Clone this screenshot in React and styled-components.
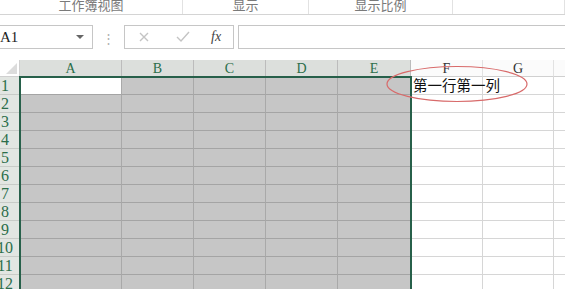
import React from "react";
import styled, { createGlobalStyle } from "styled-components";

const GlobalStyle = createGlobalStyle`
  html, body { margin: 0; padding: 0; background: #fff; overflow: hidden; }
  body { font-family: "Noto Sans CJK SC", "Liberation Sans", sans-serif; }
`;

const columns = [
  { name: "A", width: 102, sel: true },
  { name: "B", width: 72, sel: true },
  { name: "C", width: 72, sel: true },
  { name: "D", width: 72, sel: true },
  { name: "E", width: 73, sel: true },
  { name: "F", width: 72 },
  { name: "G", width: 71 },
  { name: "H", width: 60 },
];

const rows = [1, 2, 3, 4, 5, 6, 7, 8, 9, 10, 11, 12];

const groups = [
  { label: "工作簿视图", width: 183 },
  { label: "显示", width: 126 },
  { label: "显示比例", width: 144 },
  { label: "", width: 112 },
];

const gridTemplate = `28px ${columns.map((c) => c.width + "px").join(" ")}`;

export default function App() {
  return (
    <Page>
      <GlobalStyle />
      <Ribbon>
        {groups.map((g, i) => (
          <Group key={i} $w={g.width}>
            <GroupLabel>{g.label}</GroupLabel>
          </Group>
        ))}
      </Ribbon>

      <FormulaBar>
        <NameBox>
          <span>A1</span>
          <Caret />
        </NameBox>
        <Dots>⋮</Dots>
        <FxBox>
          <FxIcon>
            <svg width="12" height="12" viewBox="0 0 12 12">
              <path d="M2 2 L10 10 M10 2 L2 10" stroke="#c4c4c4" strokeWidth="1.4" />
            </svg>
          </FxIcon>
          <FxIcon>
            <svg width="14" height="12" viewBox="0 0 14 12">
              <path d="M1 6 L5 10 L13 1" stroke="#c4c4c4" strokeWidth="1.4" fill="none" />
            </svg>
          </FxIcon>
          <FxLabel>fx</FxLabel>
        </FxBox>
        <FormulaInput />
      </FormulaBar>

      <Sheet>
        <Grid>
          <Corner>
            <CornerTri />
          </Corner>
          {columns.map((c) => (
            <ColHead key={c.name} $sel={c.sel}>
              {c.name}
            </ColHead>
          ))}
          {rows.map((r) => (
            <React.Fragment key={r}>
              <RowHead>{r}</RowHead>
              {columns.map((c) => (
                <Cell
                  key={c.name}
                  $sel={c.sel}
                  $active={r === 1 && c.name === "A"}
                >
                  {r === 1 && c.name === "F" && <CellText>第一行第一列</CellText>}
                </Cell>
              ))}
            </React.Fragment>
          ))}
        </Grid>
        <Selection />
        <Mark width="150" height="42" viewBox="0 0 150 42">
          <ellipse cx="75" cy="20" rx="70" ry="17.5" fill="none" stroke="#d86a6a" strokeWidth="1.2" />
        </Mark>
      </Sheet>
    </Page>
  );
}

const Page = styled.div`
  width: 565px;
  height: 289px;
  overflow: hidden;
  background: #fff;
  position: relative;
`;

const Ribbon = styled.div`
  display: flex;
  height: 14px;
  border-bottom: 1px solid #d4d4d4;
  overflow: hidden;
`;

const Group = styled.div`
  width: ${(p) => p.$w}px;
  flex: none;
  display: flex;
  align-items: flex-end;
  justify-content: center;
  border-right: 1px solid #e2e2e2;
  box-sizing: border-box;
`;

const GroupLabel = styled.div`
  font-size: 13px;
  line-height: 13px;
  color: #7a7a7a;
  margin-bottom: 3px;
`;

const FormulaBar = styled.div`
  display: flex;
  align-items: center;
  height: 24px;
  margin-top: 10px;
  margin-left: -6px;
`;

const NameBox = styled.div`
  width: 99px;
  height: 24px;
  box-sizing: border-box;
  border: 1px solid #c6c6c6;
  display: flex;
  align-items: center;
  justify-content: space-between;
  padding: 0 8px 0 5px;
  font-family: "Liberation Serif", serif;
  font-size: 15px;
  color: #222;
`;

const Caret = styled.div`
  width: 0;
  height: 0;
  border-left: 4px solid transparent;
  border-right: 4px solid transparent;
  border-top: 4px solid #666;
`;

const Dots = styled.div`
  width: 31px;
  text-align: center;
  color: #b0b0b0;
  font-size: 13px;
`;

const FxBox = styled.div`
  width: 110px;
  height: 24px;
  box-sizing: border-box;
  border: 1px solid #c6c6c6;
  display: flex;
  align-items: center;
  padding-left: 13px;
  gap: 24px;
`;

const FxIcon = styled.div`
  display: flex;
  align-items: center;
  width: 14px;
`;

const FxLabel = styled.div`
  font-family: "Liberation Serif", serif;
  font-style: italic;
  font-size: 14px;
  color: #444;
  margin-left: -3px;
`;

const FormulaInput = styled.div`
  flex: 1;
  height: 24px;
  margin-left: 4px;
  box-sizing: border-box;
  border: 1px solid #c6c6c6;
  border-right: none;
`;

const Sheet = styled.div`
  position: relative;
  margin-top: 11px;
  margin-left: -8px;
`;

const Grid = styled.div`
  display: grid;
  grid-template-columns: ${gridTemplate};
  grid-template-rows: 17px repeat(12, 18px);
`;

const Corner = styled.div`
  background: #fff;
  border-right: 1px solid #d0d0d0;
  border-bottom: 1px solid #d0d0d0;
  position: relative;
`;

const CornerTri = styled.div`
  position: absolute;
  right: 2px;
  bottom: 2px;
  width: 0;
  height: 0;
  border-left: 11px solid transparent;
  border-bottom: 11px solid #dcdcdc;
`;

const ColHead = styled.div`
  box-sizing: border-box;
  background: ${(p) => (p.$sel ? "#dcdfdc" : "#fbfbfb")};
  border-right: 1px solid ${(p) => (p.$sel ? "#bcbcbc" : "#e2e2e2")};
  border-bottom: 1px solid #d0d0d0;
  color: ${(p) => (p.$sel ? "#2b6e4a" : "#333")};
  font-family: "Liberation Serif", serif;
  font-size: 14px;
  line-height: 17px;
  text-align: center;
`;

const RowHead = styled.div`
  box-sizing: border-box;
  background: #e2e6e2;
  border-bottom: 1px solid #c8ccc8;
  color: #2b6e4a;
  font-family: "Liberation Serif", serif;
  font-size: 16px;
  line-height: 18px;
  text-align: center;
  padding-right: 2px;
`;

const Cell = styled.div`
  box-sizing: border-box;
  position: relative;
  background: ${(p) => (p.$active ? "#fff" : p.$sel ? "#c6c6c6" : "#fff")};
  border-right: 1px solid ${(p) => (p.$sel ? "#a9a9a9" : "#d6d6d6")};
  border-bottom: 1px solid ${(p) => (p.$sel ? "#a4a4a4" : "#d6d6d6")};
`;

const CellText = styled.span`
  position: absolute;
  left: 2px;
  top: -1px;
  white-space: nowrap;
  font-family: "Noto Sans CJK SC", sans-serif;
  font-size: 14.5px;
  line-height: 18px;
  color: #111;
  z-index: 2;
`;

const Selection = styled.div`
  position: absolute;
  left: 27px;
  top: 16px;
  width: 393px;
  height: 240px;
  border: 2px solid #27604a;
  box-sizing: border-box;
  pointer-events: none;
`;

const Mark = styled.svg`
  position: absolute;
  left: 390px;
  top: 4px;
  pointer-events: none;
  z-index: 3;
`;
